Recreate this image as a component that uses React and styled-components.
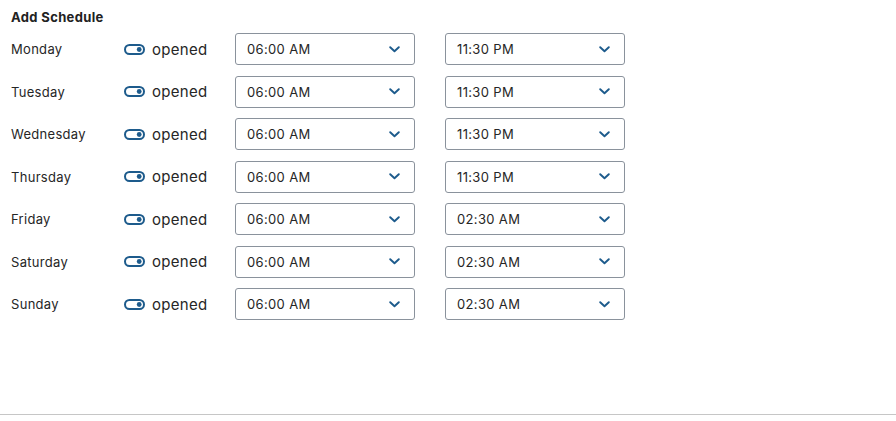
import React from 'react';
import styled, { createGlobalStyle } from 'styled-components';

const GlobalStyle = createGlobalStyle`
    html, body {
        margin: 0;
        padding: 0;
        background: #fff;
    }
    body {
        font-family: Inter, "Noto Sans", sans-serif;
        color: #1f1f1f;
    }
`;

const Page = styled.main`
    width: 896px;
    height: 421px;
    display: flex;
    flex-direction: column;
`;

const Content = styled.section`
    flex: 1;
    padding: 9px 11px 0;
`;

const Title = styled.h3`
    margin: 0 0 8px;
    font-size: 13px;
    font-weight: 700;
    letter-spacing: 0.35px;
    line-height: 16px;
    color: #222;
`;

const Rows = styled.div`
    display: flex;
    flex-direction: column;
    gap: 10.5px;
`;

const Row = styled.div`
    display: grid;
    grid-template-columns: 113px 111px 180px 180px;
    align-items: center;
    height: 32px;

    & > :nth-child(4) {
        margin-left: 30px;
    }
`;

const Day = styled.span`
    font-size: 13px;
    letter-spacing: 0.3px;
    color: #262626;
`;

const Status = styled.div`
    display: flex;
    align-items: center;
    gap: 7px;
    font-size: 15px;
    letter-spacing: 0.3px;
    color: #262626;
`;

const Select = styled.div`
    box-sizing: border-box;
    display: flex;
    align-items: center;
    justify-content: space-between;
    width: 180px;
    height: 32px;
    padding: 0 14px 0 11px;
    border: 1px solid #8a929c;
    border-radius: 3px;
    font-size: 13px;
    letter-spacing: 0.35px;
    color: #262626;
`;

const Footer = styled.footer`
    height: 6px;
    border-top: 1px solid #c6c6c6;
`;

const schedule = [
    { day: 'Monday', open: '06:00 AM', close: '11:30 PM' },
    { day: 'Tuesday', open: '06:00 AM', close: '11:30 PM' },
    { day: 'Wednesday', open: '06:00 AM', close: '11:30 PM' },
    { day: 'Thursday', open: '06:00 AM', close: '11:30 PM' },
    { day: 'Friday', open: '06:00 AM', close: '02:30 AM' },
    { day: 'Saturday', open: '06:00 AM', close: '02:30 AM' },
    { day: 'Sunday', open: '06:00 AM', close: '02:30 AM' },
];

const Toggle = () => (
    <svg width="21" height="11" viewBox="0 0 21 11">
        <rect x="1" y="1" width="19" height="9" rx="4.5" fill="none" stroke="#1d5b8c" strokeWidth="2" />
        <circle cx="15.2" cy="5.5" r="2.4" fill="#1d5b8c" />
    </svg>
);

const Chevron = () => (
    <svg width="11" height="7" viewBox="0 0 11 7">
        <path d="M1.2 1.2 L5.5 5.3 L9.8 1.2" fill="none" stroke="#1d5b8c" strokeWidth="1.9" strokeLinecap="round" strokeLinejoin="round" />
    </svg>
);

const App = () => {
    return (
        <Page>
            <GlobalStyle />
            <Content>
                <Title>Add Schedule</Title>
                <Rows>
                    {schedule.map(item => (
                        <Row key={item.day}>
                            <Day>{item.day}</Day>
                            <Status><Toggle /> opened</Status>
                            <Select>{item.open}<Chevron /></Select>
                            <Select>{item.close}<Chevron /></Select>
                        </Row>
                    ))}
                </Rows>
            </Content>
            <Footer />
        </Page>
    );
};

export default App;
